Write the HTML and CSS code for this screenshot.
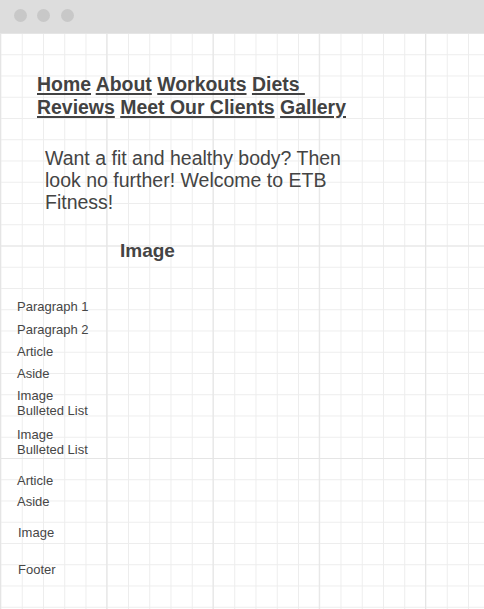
FILE: index.html
```html
<!DOCTYPE html>
<html lang="en">
<head>
<meta charset="utf-8">
<title>ETB Fitness wireframe</title>
<link rel="stylesheet" href="styles.css">
</head>
<body>
<div class="window">
  <div class="titlebar">
    <span class="dot"></span><span class="dot"></span><span class="dot"></span>
  </div>
  <main class="canvas">
    <nav class="nav">
      <a href="#">Home</a> <a href="#">About</a> <a href="#">Workouts</a> <a href="#">Diets&nbsp;</a> <a href="#">Reviews</a> <a href="#">Meet Our Clients</a> <a href="#">Gallery</a>
    </nav>
    <p class="hero">Want a fit and healthy body? Then look no further! Welcome to ETB Fitness!</p>
    <h2 class="image-title">Image</h2>
    <div class="outline">
      <div class="item first">Paragraph 1</div>
      <div class="item g8">Paragraph 2</div>
      <div class="item g7">Article</div>
      <div class="item g7">Aside</div>
      <div class="item g7">Image<br>Bulleted List</div>
      <div class="item g9">Image<br>Bulleted List</div>
      <div class="item g16">Article</div>
      <div class="item g6">Aside</div>
      <div class="item g16 shift">Image</div>
      <div class="item g22 shift">Footer</div>
    </div>
  </main>
</div>
</body>
</html>
```

FILE: styles.css
```css
html, body {
  margin: 0;
  padding: 0;
  background: #ffffff;
}

body {
  font-family: "Liberation Sans", Arial, sans-serif;
  color: #444444;
}

.window {
  width: 484px;
  height: 609px;
  overflow: hidden;
  display: flex;
  flex-direction: column;
}

.titlebar {
  height: 33px;
  flex: none;
  background: #dddddd;
  display: flex;
  align-items: center;
  gap: 10.5px;
  padding-left: 13.5px;
  padding-bottom: 2px;
  box-sizing: border-box;
}

.dot {
  width: 13px;
  height: 13px;
  border-radius: 50%;
  background: #c8c8c8;
}

.canvas {
  flex: 1;
  padding: 40px 0 0 37px;
  box-sizing: border-box;
  background-color: #ffffff;
  background-image:
    linear-gradient(to right, #e5e5e5 0, #e5e5e5 1.2px, transparent 1.2px),
    linear-gradient(to bottom, #e5e5e5 0, #e5e5e5 1.2px, transparent 1.2px),
    linear-gradient(to right, #ededed 0, #ededed 1.2px, transparent 1.2px),
    linear-gradient(to bottom, #ededed 0, #ededed 1.2px, transparent 1.2px);
  background-size: 106.25px 100%, 100% 212.5px, 21.25px 21.25px, 21.25px 21.25px;
  background-position: 0 0, 0 0, 0.5px 0, 0 0;
}

.nav {
  width: 340px;
  font-size: 19.45px;
  line-height: 22.5px;
  font-weight: bold;
}

.nav a {
  color: #424242;
  text-decoration: underline;
  text-decoration-thickness: 1.5px;
  text-underline-offset: 2px;
}

.hero {
  margin: 28.5px 0 0 8px;
  width: 325px;
  font-size: 19.5px;
  line-height: 22px;
  color: #444444;
}

.image-title {
  margin: 27px 0 0 83px;
  font-size: 19px;
  line-height: 22px;
  font-weight: bold;
  color: #444444;
}

.outline {
  margin-left: -20px;
  font-size: 13px;
  line-height: 15px;
  color: #464646;
}

.item.first { margin-top: 37px; }
.item.g6 { margin-top: 6px; }
.item.g7 { margin-top: 7px; }
.item.g8 { margin-top: 8px; }
.item.g9 { margin-top: 9px; }
.item.g16 { margin-top: 16px; }
.item.g22 { margin-top: 22.3px; }
.item.shift { padding-left: 1px; }
```
